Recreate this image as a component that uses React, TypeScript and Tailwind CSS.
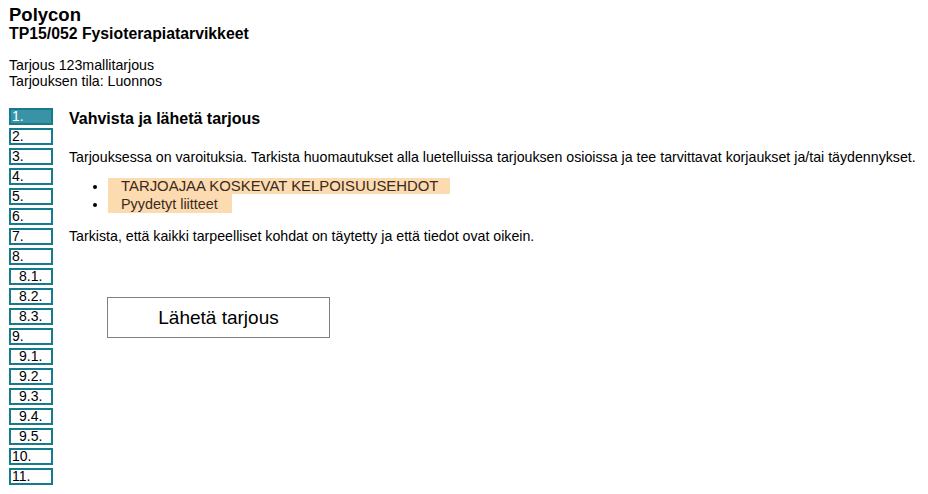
import React from 'react';

const steps: { label: string; sub?: boolean; active?: boolean }[] = [
  { label: '1.', active: true },
  { label: '2.' },
  { label: '3.' },
  { label: '4.' },
  { label: '5.' },
  { label: '6.' },
  { label: '7.' },
  { label: '8.' },
  { label: '8.1.', sub: true },
  { label: '8.2.', sub: true },
  { label: '8.3.', sub: true },
  { label: '9.' },
  { label: '9.1.', sub: true },
  { label: '9.2.', sub: true },
  { label: '9.3.', sub: true },
  { label: '9.4.', sub: true },
  { label: '9.5.', sub: true },
  { label: '10.' },
  { label: '11.' },
];

export default function App() {
  return (
    <div
      className="w-[928px] h-[494px] bg-white text-black px-[9px] pt-[5px] text-[14px] leading-[16px]"
      style={{ fontFamily: '"Liberation Sans", Arial, sans-serif' }}
    >
      <h1 className="text-[18.5px] leading-[20px] font-bold">Polycon</h1>
      <h2 className="text-[15.8px] leading-[17px] font-bold">TP15/052 Fysioterapiatarvikkeet</h2>

      <div className="mt-[15px] text-[14.2px]">
        <div>Tarjous 123mallitarjous</div>
        <div>Tarjouksen tila: Luonnos</div>
      </div>

      <div className="flex mt-[19px]">
        <nav className="flex flex-col gap-[3px] w-[44px] shrink-0">
          {steps.map((s) => (
            <div
              key={s.label}
              className={
                'h-[17px] border-2 border-[#167b8c] leading-[13px] ' +
                (s.sub ? 'pl-[8px] ' : 'pl-[1px] ') +
                (s.active ? 'bg-[#3a93a4] text-white' : 'bg-white text-black')
              }
            >
              {s.label}
            </div>
          ))}
        </nav>

        <main className="ml-[16px] flex-1 text-[14.2px]">
          <h3 className="text-[16px] leading-[18px] font-bold mt-[2px]">Vahvista ja lähetä tarjous</h3>
          <p className="mt-[21px]">
            Tarjouksessa on varoituksia. Tarkista huomautukset alla luetelluissa tarjouksen osioissa ja tee tarvittavat korjaukset ja/tai täydennykset.
          </p>
          <ul className="list-disc pl-[39px] mt-[13px]">
            <li>
              <span className="inline-block bg-[#fddbb0] text-[#3a2a20] pl-[13px] pr-[12px] leading-[16px] text-[14.9px]">
                TARJOAJAA KOSKEVAT KELPOISUUSEHDOT
              </span>
            </li>
            <li>
              <span className="inline-block bg-[#fddbb0] text-[#3a2a20] pl-[13px] pr-[14px] leading-[18px] pt-px text-[14.4px]">
                Pyydetyt liitteet
              </span>
            </li>
          </ul>
          <p className="mt-[15px]">
            Tarkista, että kaikki tarpeelliset kohdat on täytetty ja että tiedot ovat oikein.
          </p>
          <button
            type="button"
            className="mt-[53px] ml-[38px] w-[223px] h-[41px] border border-[#808080] bg-white text-[19px]"
          >
            Lähetä tarjous
          </button>
        </main>
      </div>
    </div>
  );
}
